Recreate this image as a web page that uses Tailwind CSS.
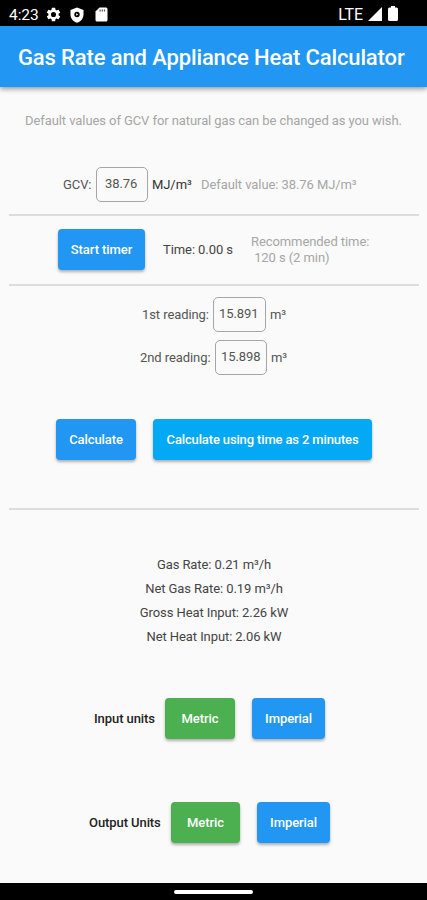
<!DOCTYPE html>
<html lang="en">

<head>
    <title>Gas Rate and Appliance Heat Calculator</title>
    <meta charset="UTF-8">
    <meta name="viewport" content="width=device-width, initial-scale=1.0">
    <script src="https://cdn.jsdelivr.net/npm/@tailwindcss/browser@4"></script>
</head>

<body class="bg-[#fafafa]">
    <div class="flex flex-col w-[427px] h-[900px] overflow-hidden bg-[#fafafa] font-[Roboto,sans-serif] text-[13px] leading-4 tracking-[-0.08px] text-[#555] whitespace-nowrap">

        <!-- status bar -->
        <div class="flex items-center h-[26px] shrink-0 bg-black text-white pl-[9px] pr-[29px] pt-[3px]">
            <span class="w-[36px] text-[15.5px]">4:23</span>
            <svg class="size-[17px]" viewBox="0 0 24 24" fill="currentColor">
                <path d="M19.14 12.94c.04-.3.06-.61.06-.94 0-.32-.02-.64-.07-.94l2.03-1.58a.49.49 0 0 0 .12-.61l-1.92-3.32a.49.49 0 0 0-.59-.22l-2.39.96c-.5-.38-1.03-.7-1.62-.94l-.36-2.54a.48.48 0 0 0-.48-.41h-3.84a.47.47 0 0 0-.47.41l-.36 2.54c-.59.24-1.13.57-1.62.94l-2.39-.96a.47.47 0 0 0-.59.22L2.74 8.87a.48.48 0 0 0 .12.61l2.03 1.58c-.05.3-.09.63-.09.94s.02.64.07.94l-2.03 1.58a.49.49 0 0 0-.12.61l1.92 3.32c.12.22.37.29.59.22l2.39-.96c.5.38 1.03.7 1.62.94l.36 2.54c.05.24.24.41.48.41h3.84c.24 0 .44-.17.47-.41l.36-2.54c.59-.24 1.13-.56 1.62-.94l2.39.96c.22.08.47 0 .59-.22l1.92-3.32a.47.47 0 0 0-.12-.61zM12 15.6A3.6 3.6 0 1 1 12 8.4a3.6 3.6 0 0 1 0 7.2z" />
            </svg>
            <svg class="w-[14px] h-[16px] ml-[8px]" viewBox="0 0 14 16" fill="currentColor">
                <path d="M7 0.500 13.500 3v4.500c0 4-2.700 7-6.500 8.200C3.200 14.500.500 11.500.500 7.500V3z" />
                <circle class="fill-black" cx="7" cy="7.500" r="2.700" />
                <path d="M6.200 6.300v2.400l2-1.200z" />
            </svg>
            <svg class="w-[13px] h-[15px] ml-[11px]" viewBox="0 0 13 15" fill="currentColor">
                <path d="M4.500 0.500h6.500q1.500 0 1.500 1.500v11q0 1.500-1.500 1.500H2q-1.500 0-1.500-1.500V4.500z" />
                <path class="fill-[#555]" d="M4.500 2.500h1.200v2H4.500zM6.700 2.500h1.200v2H6.700zM8.900 2.500h1.200v2H8.900z" />
            </svg>
            <span class="ml-auto text-[16px]">LTE</span>
            <svg class="w-[14px] h-[14px] ml-[5px] mb-px" viewBox="0 0 14 14" fill="currentColor">
                <path d="M14 0v14H0z" />
            </svg>
            <svg class="w-[10px] h-[15px] ml-[6px] mb-[2px]" viewBox="0 0 10 15" fill="currentColor">
                <path d="M3 0h4v1.500h1.500q1.500 0 1.500 1.500v10.500q0 1.500-1.500 1.500h-7q-1.500 0-1.500-1.500V3q0-1.500 1.500-1.500H3z" />
            </svg>
        </div>

        <!-- app bar -->
        <header class="relative flex items-center h-[61px] shrink-0 bg-[#2196f3] pl-[18px] pt-[3px] shadow-[0_2px_5px_rgba(0,0,0,0.4)]">
            <h1 class="text-[22px] leading-7 font-medium tracking-[-0.13px] text-white">Gas Rate and Appliance Heat Calculator</h1>
        </header>

        <main class="flex flex-col grow pl-[9px] pr-[8px]">
            <p class="mt-[26px] pl-[16px] text-[#a6a6a6]">Default values of GCV for natural gas can be changed as you wish.</p>

            <div class="flex items-center mt-[38px] h-[35px] pl-[54px]">
                <span class="w-[33px]">GCV:</span>
                <div class="w-[52px] h-[35px] rounded-[5px] border border-[#a6a6a6] pl-[8px] leading-[32px]">38.76</div>
                <span class="w-[49px] pl-[4px] text-[#333]">MJ/m³</span>
                <span class="pl-[4px] text-[#a6a6a6]">Default value: 38.76 MJ/m³</span>
            </div>

            <hr class="mt-[12px] border-t-2 border-[#dcdcdc]">

            <div class="flex items-center h-[68px] pl-[49px]">
                <button class="w-[87px] h-[41px] mb-px rounded-[4px] bg-[#2196f3] font-medium text-white shadow-[0_2px_3px_rgba(0,0,0,0.3)]">Start timer</button>
                <span class="w-[106px] pl-[18px] text-[#444]">Time: 0.00 s</span>
                <span class="text-[#a6a6a6] whitespace-pre">Recommended time:
 120 s (2 min)</span>
            </div>

            <hr class="border-t-2 border-[#dcdcdc]">

            <div class="flex items-center mt-[11px] h-[35px] pl-[133px]">
                <span class="w-[71px]">1st reading:</span>
                <div class="w-[53px] h-[35px] rounded-[5px] border border-[#a6a6a6] pl-[5px] leading-[32px]">15.891</div>
                <span class="pl-[4px]">m³</span>
            </div>
            <div class="flex items-center mt-[8px] h-[35px] pl-[131px]">
                <span class="w-[75px]">2nd reading:</span>
                <div class="w-[52px] h-[35px] rounded-[5px] border border-[#a6a6a6] pl-[5px] leading-[32px]">15.898</div>
                <span class="pl-[4px]">m³</span>
            </div>

            <div class="flex mt-[44px] pl-[47px] gap-[17px]">
                <button class="w-[80px] h-[41px] rounded-[4px] bg-[#2196f3] font-medium text-white shadow-[0_2px_3px_rgba(0,0,0,0.3)]">Calculate</button>
                <button class="w-[219px] h-[41px] rounded-[4px] bg-[#03a9f4] font-medium tracking-[-0.14px] text-white shadow-[0_2px_3px_rgba(0,0,0,0.3)]">Calculate using time as 2 minutes</button>
            </div>

            <hr class="mt-[48px] border-t-2 border-[#dcdcdc]">

            <div class="mt-[43px] text-center leading-6 text-[#444]">
                <p>Gas Rate: 0.21 m³/h</p>
                <p>Net Gas Rate: 0.19 m³/h</p>
                <p>Gross Heat Input: 2.26 kW</p>
                <p>Net Heat Input: 2.06 kW</p>
            </div>

            <div class="flex items-center mt-[49px] pl-[85px]">
                <span class="w-[71px] font-medium text-[#222]">Input units</span>
                <button class="w-[70px] h-[41px] rounded-[4px] bg-[#4caf50] font-medium text-white shadow-[0_2px_3px_rgba(0,0,0,0.3)]">Metric</button>
                <button class="w-[73px] h-[41px] ml-[17px] rounded-[4px] bg-[#2196f3] font-medium text-white shadow-[0_2px_3px_rgba(0,0,0,0.3)]">Imperial</button>
            </div>
            <div class="flex items-center mt-[63px] pl-[80px]">
                <span class="w-[82px] font-medium text-[#222]">Output Units</span>
                <button class="w-[69px] h-[41px] rounded-[4px] bg-[#4caf50] font-medium text-white shadow-[0_2px_3px_rgba(0,0,0,0.3)]">Metric</button>
                <button class="w-[73px] h-[41px] ml-[17px] rounded-[4px] bg-[#2196f3] font-medium text-white shadow-[0_2px_3px_rgba(0,0,0,0.3)]">Imperial</button>
            </div>
        </main>

        <!-- gesture bar -->
        <div class="flex items-center justify-center h-[17px] shrink-0 bg-black">
            <div class="w-[79px] h-[4px] rounded-full bg-white"></div>
        </div>
    </div>
</body>

</html>
